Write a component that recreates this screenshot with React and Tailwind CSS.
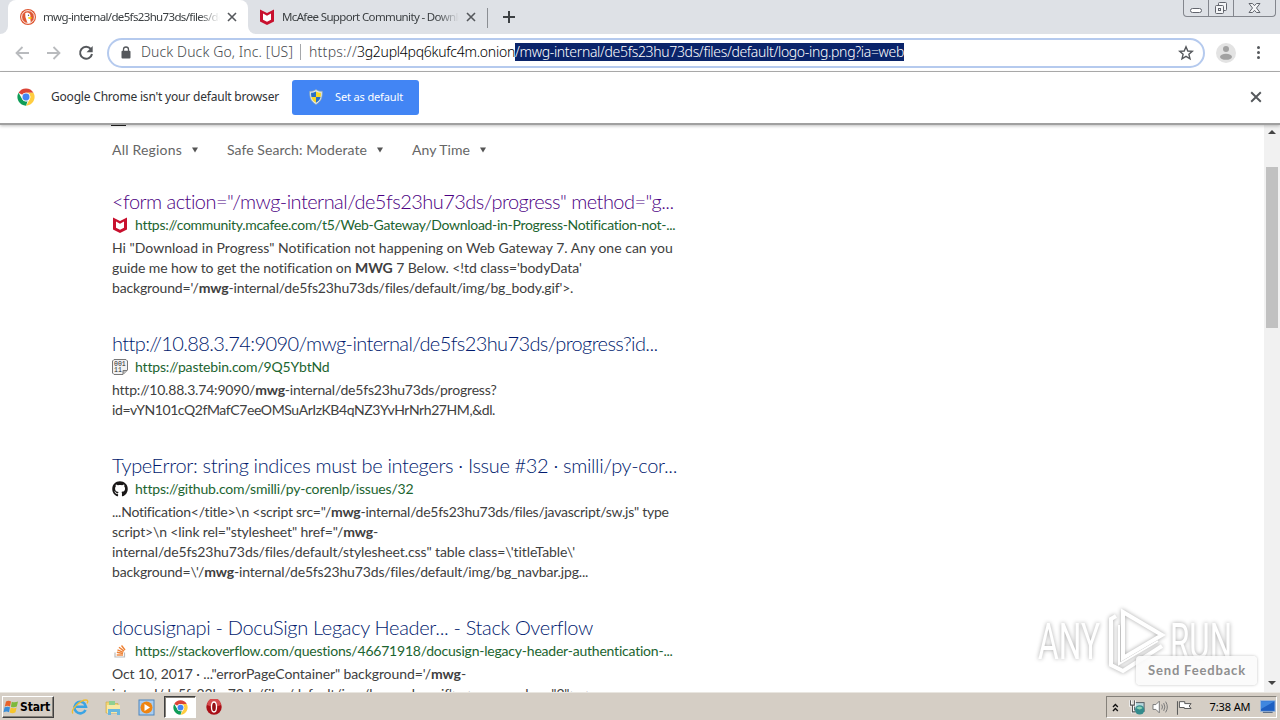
import React, { useLayoutEffect, useRef, useState } from "react";
import { FaGithub } from "react-icons/fa";
import { clsx } from "clsx";

const PAGE_FONT = "font-['Lato','Open_Sans',sans-serif]";
const UI_FONT = "font-['Noto_Sans','Open_Sans',sans-serif]";

// One line of text, tracked so that it fills exactly `width` pixels
function FitText({ width, className, children }) {
  const ref = useRef(null);
  const [spacing, setSpacing] = useState(0);

  useLayoutEffect(() => {
    const measure = () => {
      const el = ref.current;
      if (!el) return;
      el.style.letterSpacing = "0px";
      const natural = el.getBoundingClientRect().width;
      const next = (width - natural) / el.textContent.length;
      el.style.letterSpacing = `${next}px`;
      setSpacing(next);
    };
    measure();
    document.fonts.ready.then(measure);
  }, [width]);

  return (
    <span ref={ref} className={clsx("inline-block whitespace-pre", className)} style={{ letterSpacing: `${spacing}px` }}>
      {children}
    </span>
  );
}

const FILTERS = [
  { label: "All Regions", width: 70 },
  { label: "Safe Search: Moderate", width: 140 },
  { label: "Any Time", width: 58 }
];

const RESULTS = [
  {
    title: "<form action=\"/mwg-internal/de5fs23hu73ds/progress\" method=\"g...",
    titleWidth: 562,
    visited: true,
    icon: <McAfeeIcon />,
    url: "https://community.mcafee.com/t5/Web-Gateway/Download-in-Progress-Notification-not-...",
    urlWidth: 540,
    lines: [
      { text: "Hi \"Download in Progress\" Notification not happening on Web Gateway 7. Any one can you", width: 561 },
      { text: <>guide me how to get the notification on <b>MWG</b> 7 Below. &lt;!td class='bodyData'</>, width: 470 },
      { text: <>background='/<b>mwg</b>-internal/de5fs23hu73ds/files/default/img/bg_body.gif'&gt;.</>, width: 461 }
    ]
  },
  {
    title: "http://10.88.3.74:9090/mwg-internal/de5fs23hu73ds/progress?id...",
    titleWidth: 545,
    icon: <PastebinIcon />,
    url: "https://pastebin.com/9Q5YbtNd",
    urlWidth: 194,
    lines: [
      { text: <>http://10.88.3.74:9090/<b>mwg</b>-internal/de5fs23hu73ds/progress?</>, width: 384 },
      { text: "id=vYN101cQ2fMafC7eeOMSuArIzKB4qNZ3YvHrNrh27HM,&dl.", width: 383 }
    ]
  },
  {
    title: "TypeError: string indices must be integers · Issue #32 · smilli/py-cor...",
    titleWidth: 565,
    icon: <FaGithub size={16} className="text-[#191717]" />,
    url: "https://github.com/smilli/py-corenlp/issues/32",
    urlWidth: 278,
    lines: [
      { text: <>...Notification&lt;/title&gt;\n &lt;script src="/<b>mwg</b>-internal/de5fs23hu73ds/files/javascript/sw.js" type</>, width: 557 },
      { text: <>script&gt;\n &lt;link rel="stylesheet" href="/<b>mwg</b>-</>, width: 266 },
      { text: "internal/de5fs23hu73ds/files/default/stylesheet.css\" table class=\\'titleTable\\'", width: 463 },
      { text: <>background=\'/<b>mwg</b>-internal/de5fs23hu73ds/files/default/img/bg_navbar.jpg...</>, width: 476 }
    ]
  },
  {
    title: "docusignapi - DocuSign Legacy Header... - Stack Overflow",
    titleWidth: 481,
    icon: <StackOverflowIcon />,
    url: "https://stackoverflow.com/questions/46671918/docusign-legacy-header-authentication-...",
    urlWidth: 538,
    lines: [
      { text: <>Oct 10, 2017 · ..."errorPageContainer" background='/<b>mwg</b>-</>, width: 354 },
      { text: "internal/de5fs23hu73ds/files/default/img/bg_navbar.gif'> <param value=\"2\"> <...", width: 486 }
    ]
  }
];

function McAfeeIcon() {
  return (
    <svg width="16" height="16" viewBox="0 0 16 16">
      <path d="M1 0.5 L8 4 L15 0.5 V12.5 L8 16 L1 12.5 Z" fill="#c8102e" />
      <path d="M4 4.5 L8 6.7 L12 4.5 V10.7 L8 12.7 L4 10.7 Z" fill="#fff" />
    </svg>
  );
}

function PastebinIcon() {
  return (
    <svg width="16" height="16" viewBox="0 0 16 16">
      <path d="M2 0.5 H14 L15.5 2 V11 L11 15.5 H2 L0.5 14 V2 Z" fill="#f2f2f2" stroke="#777" />
      <path d="M11 15 V11.5 H15" fill="#bbb" stroke="#777" />
      <g fill="#222" fontSize="6.5" fontFamily="Liberation Mono, monospace">
        <text x="2" y="7">001</text>
        <text x="2" y="13">11</text>
      </g>
    </svg>
  );
}

function StackOverflowIcon() {
  return (
    <svg width="16" height="16" viewBox="0 0 16 16" fill="none">
      <path d="M3 9.5 V14 H12.5 V9.5" stroke="#bcbbbb" strokeWidth="1.2" />
      <g stroke="#ee8236" strokeWidth="1.4">
        <path d="M4.7 12 H11" />
        <path d="M4.9 9.3 L11 10.5" />
        <path d="M5.5 6.8 L11.3 9.3" />
        <path d="M7 4.2 L12 8.1" />
        <path d="M9.5 2.5 L13 7" />
      </g>
    </svg>
  );
}

function DuckIcon() {
  return (
    <svg width="16" height="16" viewBox="0 0 16 16">
      <circle cx="8" cy="8" r="8" fill="#de5833" />
      <circle cx="8" cy="8" r="6.4" fill="none" stroke="#fff" strokeWidth="0.9" />
      <path d="M5.2 4.2 C7 2.6 10.2 3.5 10.5 6.4 L10.2 9 L10.8 13.4 C9.5 14 8.3 14 7.4 13.7 L5.4 8 Z" fill="#fff" />
      <path d="M8.2 8.3 L12 8 L10.8 9.2 L12 10 L8.4 9.8 Z" fill="#fdd20a" />
      <circle cx="8.5" cy="6.2" r="0.7" fill="#3a4f66" />
    </svg>
  );
}

function ChromeIcon({ size }) {
  return (
    <svg width={size} height={size} viewBox="0 0 48 48">
      <circle cx="24" cy="24" r="23" fill="#fff" />
      <path d="M24 1 A23 23 0 0 1 43.9 12.5 H24 A11.5 11.5 0 0 0 14 18.2 L4.1 12.5 A23 23 0 0 1 24 1 Z" fill="#db4437" />
      <path d="M43.9 12.5 A23 23 0 0 1 24 47 L34 29.7 A11.5 11.5 0 0 0 30 14 L24 12.5 Z" fill="#ffcd40" />
      <path d="M4.1 12.5 L14 29.7 A11.5 11.5 0 0 0 28 35 L24 47 A23 23 0 0 1 4.1 12.5 Z" fill="#0f9d58" />
      <circle cx="24" cy="24" r="11.5" fill="#f1f1f1" />
      <circle cx="24" cy="24" r="9.2" fill="#4285f4" />
    </svg>
  );
}

function ShieldIcon() {
  return (
    <svg width="14" height="16" viewBox="0 0 14 16">
      <path d="M7 0.5 C9 2 11 2.4 13.3 2.3 C13.6 8.5 12 12.8 7 15.5 C2 12.8 0.4 8.5 0.7 2.3 C3 2.4 5 2 7 0.5 Z" fill="#dfe7ec" stroke="#8ba5b5" strokeWidth="0.7" />
      <path d="M7 2.4 V8 H2.4 C2 6.5 2 5 2.1 3.7 C4 3.7 5.5 3.3 7 2.4 Z" fill="#2b6fc4" />
      <path d="M7 2.4 C8.5 3.3 10 3.7 11.9 3.7 C12 5 12 6.5 11.6 8 H7 Z" fill="#f8d827" />
      <path d="M2.4 8 H7 V13.8 C4.2 12.2 3 10.5 2.4 8 Z" fill="#f8d827" />
      <path d="M11.6 8 H7 V13.8 C9.8 12.2 11 10.5 11.6 8 Z" fill="#2b6fc4" />
    </svg>
  );
}

function CloseIcon({ size, className }) {
  return (
    <svg width={size} height={size} viewBox="0 0 10 10" className={className}>
      <path d="M1 1 L9 9 M9 1 L1 9" stroke="currentColor" strokeWidth="1.6" />
    </svg>
  );
}

function WindowControls() {
  return (
    <div className="absolute top-0 right-[4px] flex h-[17px] w-[93px] rounded-b border border-t-0 border-[#83868d] text-[#62656d]">
      <div className="flex w-[25px] items-end justify-center border-r border-[#83868d] pb-[3px]">
        <div className="h-[5px] w-3 rounded-sm border border-current bg-white" />
      </div>
      <div className="flex w-[25px] items-center justify-center border-r border-[#83868d]">
        <svg width="14" height="14" viewBox="0 0 14 14" fill="#f4f5f7" stroke="currentColor">
          <rect x="4.5" y="1.5" width="8" height="8" rx="1" />
          <rect x="1.5" y="4.5" width="8" height="8" rx="1" />
          <rect x="4.5" y="7.5" width="2" height="2" />
        </svg>
      </div>
      <div className="flex flex-1 items-center justify-center">
        <svg width="13" height="12" viewBox="0 0 13 12" fill="#f4f5f7" stroke="currentColor">
          <path d="M1 1.5 H4.5 L6.5 3.7 L8.5 1.5 H12 L8.5 6 L12 10.5 H8.5 L6.5 8.3 L4.5 10.5 H1 L4.5 6 Z" />
        </svg>
      </div>
    </div>
  );
}

function TabStrip() {
  return (
    <div className="relative flex h-[34px] bg-[#dee1e6] text-[11.5px] text-[#3c4043]">
      <div className="h-full w-2 bg-white">
        <div className="h-full rounded-br-lg bg-[#dee1e6]" />
      </div>
      <div className="flex w-[240px] items-center rounded-t-lg bg-white pl-3">
        <DuckIcon />
        <div className="ml-[7px] w-[177px] overflow-hidden mask-r-from-88% mask-r-to-100%">
          <FitText width={190}>mwg-internal/de5fs23hu73ds/files/defa</FitText>
        </div>
        <CloseIcon size={10} className="ml-[7px] text-[#55585c]" />
      </div>
      <div className="h-full bg-white">
        <div className="flex h-full w-[239px] items-center rounded-bl-lg bg-[#dee1e6] pl-[11px]">
          <McAfeeIcon />
          <div className="ml-[7px] w-[177px] overflow-hidden mask-r-from-88% mask-r-to-100%">
            <FitText width={188}>McAfee Support Community - Downloa</FitText>
          </div>
          <CloseIcon size={10} className="ml-[7px] text-[#55585c]" />
        </div>
      </div>
      <div className="mt-2 h-5 w-px bg-[#8b8e93]" />
      <svg width="12" height="12" viewBox="0 0 12 12" className="mt-[11px] ml-[15px]">
        <path d="M6 0 V12 M0 6 H12" stroke="#3c4043" strokeWidth="2" />
      </svg>
      <WindowControls />
    </div>
  );
}

function ArrowIcon({ className }) {
  return (
    <svg width="14" height="14" viewBox="0 0 14 14" className={className} fill="none" stroke="#b9bbbe" strokeWidth="1.8">
      <path d="M14 7 H1.5 M7.5 1 L1.5 7 L7.5 13" />
    </svg>
  );
}

function Toolbar() {
  return (
    <div className="flex h-[38px] items-center border-b border-[#b0b0b0] bg-white">
      <ArrowIcon className="ml-[15px]" />
      <ArrowIcon className="ml-[18px] rotate-180" />
      <svg width="16" height="16" viewBox="0 0 16 16" className="ml-[17px]" fill="none">
        <path d="M12.8 4 A6 6 0 1 0 14 9" stroke="#55585c" strokeWidth="2" />
        <path d="M14.7 1 V7.2 H8.5 Z" fill="#55585c" />
      </svg>
      <div className="ml-[13px] flex h-[30px] w-[1098px] items-center rounded-full border-2 border-[#b5caee] text-sm leading-[18px] font-light text-[#46494d]">
        <svg width="10" height="13" viewBox="0 0 10 13" className="ml-3">
          <path d="M2.5 6 V3.5 A2.5 2.5 0 0 1 7.5 3.5 V6" fill="none" stroke="#55585c" strokeWidth="1.3" />
          <rect x="0.5" y="4.8" width="9" height="7.7" rx="1" fill="#55585c" />
        </svg>
        <div className="ml-[10px] flex items-center pb-[2px]">
          <FitText width={152}>Duck Duck Go, Inc. [US]</FitText>
          <div className="mr-[8px] ml-[7px] h-4 w-px bg-[#a5a7aa]" />
          <FitText width={48}>https://</FitText>
          <FitText width={158} className="text-black">3g2upl4pq6kufc4m.onion</FitText>
          <FitText width={389} className="bg-[#0a246a] text-white">/mwg-internal/de5fs23hu73ds/files/default/logo-ing.png?ia=web</FitText>
        </div>
        <svg width="16" height="16" viewBox="0 0 16 16" className="mr-[9px] ml-auto" fill="none" stroke="#55585c" strokeWidth="1.4">
          <path d="M8 1.8 L9.8 6 L14.3 6.3 L10.9 9.3 L12 13.8 L8 11.4 L4 13.8 L5.1 9.3 L1.7 6.3 L6.2 6 Z" />
        </svg>
      </div>
      <svg width="20" height="20" viewBox="0 0 20 20" className="ml-[11px]">
        <circle cx="10" cy="10" r="10" fill="#e3e3e3" />
        <circle cx="10" cy="6" r="3" fill="#a2a2a2" />
        <ellipse cx="10" cy="13.8" rx="6" ry="3" fill="#a2a2a2" />
      </svg>
      <div className="ml-[21px] flex flex-col gap-[2px]">
        <div className="size-[3px] rounded-full bg-[#55585c]" />
        <div className="size-[3px] rounded-full bg-[#55585c]" />
        <div className="size-[3px] rounded-full bg-[#55585c]" />
      </div>
    </div>
  );
}

function InfoBar() {
  return (
    <div className="relative z-10 flex h-[53px] items-center border-b-2 border-[#a0a0a0] bg-white pb-px text-xs text-[#303235] shadow-[0_1px_3px_rgba(0,0,0,0.25)]">
      <div className="ml-[17px]">
        <ChromeIcon size={18} />
      </div>
      <FitText width={228} className="ml-4">Google Chrome isn't your default browser</FitText>
      <button className="ml-[13px] flex h-[35px] w-[127px] items-center rounded-[3px] bg-[#4285f4] pl-[17px] text-[11px] text-white">
        <ShieldIcon />
        <FitText width={68} className="ml-3">Set as default</FitText>
      </button>
      <CloseIcon size={12} className="mr-[18px] ml-auto text-[#55585c]" />
    </div>
  );
}

function Result({ result }) {
  return (
    <article className="mb-[33px]">
      <h2 className={clsx("h-[26px] text-[20px] leading-[24px] font-light", result.visited ? "text-[#4b0082]" : "text-[#001a6e]")}>
        <FitText width={result.titleWidth}>{result.title}</FitText>
      </h2>
      <div className="mb-[3px] flex h-5 items-center gap-[7px] text-sm leading-5 text-[#1c6430]">
        {result.icon}
        <FitText width={result.urlWidth}>{result.url}</FitText>
      </div>
      {result.lines.map((line, i) => (
        <p key={i} className="h-5 text-sm leading-5 text-[#404040]">
          <FitText width={line.width}>{line.text}</FitText>
        </p>
      ))}
    </article>
  );
}

function Watermark() {
  return (
    <svg
      width="200"
      height="68"
      viewBox="0 0 200 68"
      className="absolute right-[28px] bottom-[16px] drop-shadow-[0_0_2px_rgba(0,0,0,0.35)]"
      fill="#fff"
      fontSize="50"
      fontFamily="Roboto, sans-serif"
    >
      <text x="2" y="51" textLength="62" lengthAdjust="spacingAndGlyphs">ANY</text>
      <g fill="none" stroke="#fff" strokeWidth="4">
        <path d="M87 4 L126 27 L87 50 Z" />
        <path d="M80 8 L75 11 V57 L87 63 L126 38" />
        <path d="M83 17 V56 L122 33" strokeWidth="2" />
      </g>
      <text x="134" y="51" textLength="62" lengthAdjust="spacingAndGlyphs">RUN</text>
    </svg>
  );
}

function ScrollBar() {
  return (
    <div className="flex w-4 flex-col items-center bg-[#f1f1f1]">
      <svg width="8" height="4" viewBox="0 0 8 4" className="mt-[5px]">
        <path d="M0 4 L4 0 L8 4 Z" fill="#444" />
      </svg>
      <div className="mt-[33px] h-[161px] w-3 bg-[#c1c1c1]" />
      <svg width="8" height="4" viewBox="0 0 8 4" className="mt-auto mb-[7px]">
        <path d="M0 0 L4 4 L8 0 Z" fill="#444" />
      </svg>
    </div>
  );
}

function SearchPage() {
  return (
    <div className={clsx("flex h-[567px] overflow-hidden bg-white", PAGE_FONT)}>
      <main className="relative h-[567px] flex-1 overflow-hidden pl-28">
        <div className="-ml-px h-px w-[15px] bg-[#222]" />
        <div className="mt-[14px] flex h-5 items-center gap-[29px] text-sm leading-5 text-[#666]">
          {FILTERS.map((f) => (
            <div key={f.label} className="flex items-center">
              <FitText width={f.width}>{f.label}</FitText>
              <svg width="6" height="6" viewBox="0 0 6 6" className="ml-[10px]">
                <path d="M0 0.5 H6 L3 5.5 Z" fill="#555" />
              </svg>
            </div>
          ))}
        </div>
        <div className="mt-[29px]">
          {RESULTS.map((r) => <Result key={r.url} result={r} />)}
        </div>
        <Watermark />
        <button className="absolute right-[7px] bottom-[7px] flex h-[29px] w-[121px] items-center justify-center rounded bg-[#fbfbfb]/90 pl-px text-[13px] font-bold text-[#8f8f8f] shadow-[0_0_3px_rgba(0,0,0,0.25)]">
          <FitText width={98}>Send Feedback</FitText>
        </button>
      </main>
      <ScrollBar />
    </div>
  );
}

function WindowsLogo() {
  return (
    <svg width="16" height="16" viewBox="0 0 16 16">
      <path d="M3 2.5 Q5.5 1 8 2.5 L7 7.5 Q4.5 6 1.8 7.5 Z" fill="#e8632a" />
      <path d="M8.8 2.8 Q11.5 4 15 2.5 L13.8 7.5 Q11 9 7.9 7.8 Z" fill="#7db93b" />
      <path d="M1.6 8.3 Q4.5 7 7 8.3 L6 13.2 Q3.5 12 0.5 13.3 Z" fill="#3b8ed8" />
      <path d="M7.7 8.6 Q10.5 10 13.6 8.4 L12.5 13.3 Q9.5 15 6.7 13.5 Z" fill="#f6c52c" />
    </svg>
  );
}

function ExplorerIcon() {
  return (
    <svg width="18" height="18" viewBox="0 0 18 18" fill="none">
      <path d="M14.5 12 A5.8 5.8 0 1 1 15 8.8 H5" stroke="#3ba4e4" strokeWidth="2.6" />
      <path d="M2 15.5 C-1 12 9 2 15 2 C17.5 2 17 4 16 5.5" stroke="#f0bd30" strokeWidth="1.3" />
    </svg>
  );
}

function FolderIcon() {
  return (
    <svg width="17" height="17" viewBox="0 0 17 17">
      <path d="M1 3 H6 L7.5 4.5 H13 V14 H1 Z" fill="#f2d573" stroke="#c9a848" strokeWidth="0.6" />
      <path d="M4 2 H10 V7 H4 Z" fill="#8fcf92" />
      <path d="M2 6 H15 V14 H2 Z" fill="#f8e8a4" />
      <path d="M3 16 V10 H15 V16 H12 V13 H6 V16 Z" fill="#69b7df" />
    </svg>
  );
}

function PlayerIcon() {
  return (
    <svg width="17" height="17" viewBox="0 0 17 17">
      <rect x="1" y="1" width="15" height="15" fill="#a9cdf0" stroke="#4e86be" />
      <circle cx="8.5" cy="8.5" r="6" fill="#ee8512" />
      <path d="M6.5 5 L12 8.5 L6.5 12 Z" fill="#fff" />
    </svg>
  );
}

function OperaIcon() {
  return (
    <svg width="16" height="16" viewBox="0 0 16 16">
      <circle cx="8" cy="8" r="7.7" fill="#a90f17" />
      <path d="M1 6 A7 7 0 0 1 15 6 Q8 9 1 6 Z" fill="#d64a4d" />
      <ellipse cx="8" cy="8" rx="2.5" ry="5" fill="#951015" stroke="#fff" strokeWidth="1.3" />
    </svg>
  );
}

function TrayIcons() {
  return (
    <>
      <svg width="7" height="9" viewBox="0 0 7 9" className="ml-[5px]" fill="none" stroke="#111" strokeWidth="1.4">
        <path d="M1 4 L3.5 1.5 L6 4 M1 8 L3.5 5.5 L6 8" />
      </svg>
      <svg width="17" height="16" viewBox="0 0 17 16" className="ml-[10px]">
        <rect x="5.5" y="3.5" width="10" height="9" fill="#b8d9df" stroke="#525b62" />
        <path d="M1.5 1 V6 H5.5 V1 M3.5 6 V13 H7" fill="none" stroke="#fff" strokeWidth="3" />
        <path d="M1.5 1 V6 H5.5 V1 M3.5 6 V13 H7" fill="none" stroke="#555" strokeWidth="1.2" />
        <circle cx="11" cy="11" r="4.8" fill="#338b8c" />
        <path d="M7.5 9 Q11 6 14 9 Q11 12 7.5 9 Z" fill="#8bd1b4" />
      </svg>
      <svg width="17" height="14" viewBox="0 0 17 14" className="ml-[7px]" fill="none" stroke="#777">
        <path d="M1 4.5 H4 L7.5 1 V13 L4 9.5 H1 Z" fill="#fff" />
        <path d="M10 4.5 Q11.5 7 10 9.5 M12 3 Q14.5 7 12 11 M14 1.5 Q17.5 7 14 12.5" />
      </svg>
      <svg width="17" height="15" viewBox="0 0 17 15" className="ml-[7px]" fill="#fff" stroke="#555">
        <path d="M1.5 1 V15 M3.5 1.5 H9 V3.5 H15.5 L13.5 6 L15.5 8.5 H8.5 V7.5 H3.5 Z" />
      </svg>
    </>
  );
}

function TaskBar() {
  return (
    <div className="flex h-7 items-center border-t border-[#e9e6e0] bg-[#d5cec5] pt-px">
      <button className="ml-[2px] flex h-[22px] w-[52px] items-center border border-t-white border-r-[#404040] border-b-[#404040] border-l-white text-xs font-bold text-black shadow-[inset_-1px_-1px_0_#85817a]">
        <WindowsLogo />
        <FitText width={30} className="ml-px font-['DejaVu_Sans_Condensed','DejaVu_Sans',sans-serif]">Start</FitText>
      </button>
      <div className="ml-[17px] flex items-center gap-4">
        <ExplorerIcon />
        <FolderIcon />
        <PlayerIcon />
      </div>
      <div className="ml-[9px] flex h-[22px] w-8 items-center justify-center border border-t-[#404040] border-r-white border-b-white border-l-[#404040] bg-white shadow-[inset_1px_1px_0_#85817a]">
        <ChromeIcon size={15} />
      </div>
      <div className="ml-[10px]">
        <OperaIcon />
      </div>
      <div className="mr-[3px] ml-auto flex h-[22px] w-[171px] items-center border border-t-[#85817a] border-r-white border-b-white border-l-[#85817a] text-[11px] text-black">
        <TrayIcons />
        <FitText width={41} className="ml-[17px]">7:38 AM</FitText>
        <svg width="16" height="14" viewBox="0 0 16 14" className="ml-[10px]">
          <rect x="0.5" y="0.5" width="15" height="11" fill="#1d5fc2" stroke="#9db9dd" />
          <path d="M1 1 H15 L1 9 Z" fill="#3f87df" />
          <path d="M3 12.5 H13" stroke="#455a78" />
        </svg>
      </div>
    </div>
  );
}

export default function App() {
  return (
    <div className={clsx("h-[720px] w-[1280px] overflow-hidden bg-white", UI_FONT)}>
      <TabStrip />
      <Toolbar />
      <InfoBar />
      <SearchPage />
      <TaskBar />
    </div>
  );
}
